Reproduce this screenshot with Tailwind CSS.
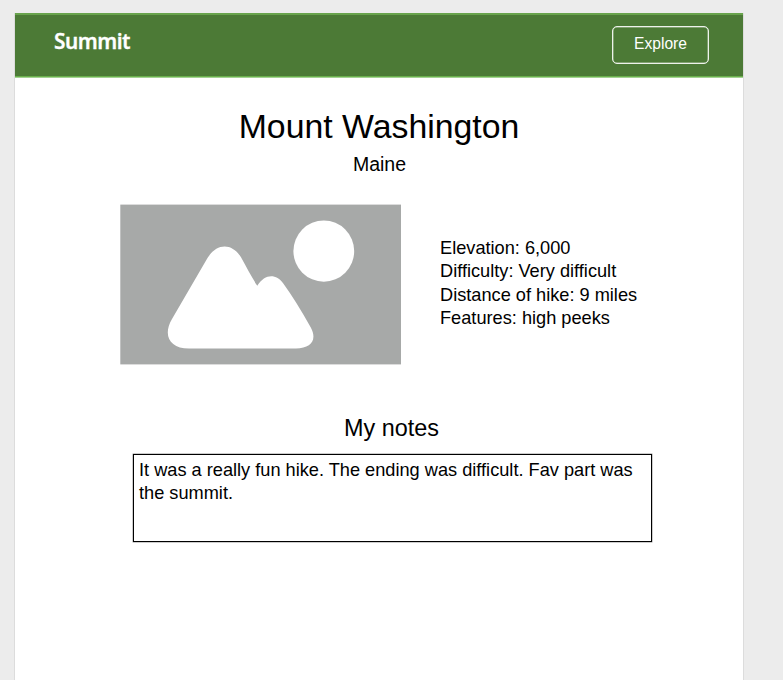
<!DOCTYPE html>
<html lang="en">
<head>
<meta charset="utf-8">
<title>Summit</title>
<script src="https://cdn.jsdelivr.net/npm/@tailwindcss/browser@4"></script>
</head>
<body class="h-[680px] overflow-hidden bg-[#ececec] pt-[13px] pl-[14px] font-['Liberation_Sans',Arial,sans-serif] text-black">
<div class="h-[667px] w-[730px] border-x border-[#dcdcdc] bg-white">
  <header class="mb-px flex h-[64px] items-start justify-between border-t-2 border-b border-t-[#68a34c] border-b-[#69b04c] bg-[#4c7a36] pr-[34px] pl-[39px] shadow-[0_1px_0_#a5d193]">
    <div class="mt-[11px] font-['Noto_Sans',sans-serif] text-[20.8px] leading-[30px] font-semibold tracking-[-0.5px] text-white [-webkit-text-stroke:0.3px_white]">Summit</div>
    <button class="mt-[11px] h-[38px] w-[97px] rounded-[5px] border border-white/90 pb-[2px] text-[15.6px] leading-[20px] text-white shadow-[inset_0_0_0_0.5px_rgba(255,255,255,0.6)]">Explore</button>
  </header>
  <main>
    <h1 class="pt-[27px] text-center text-[33.8px] leading-[42px]">Mount Washington</h1>
    <p class="mt-[5px] pl-px text-center text-[19.5px] leading-[24px]">Maine</p>
    <section class="mt-[28px] flex pl-[105px]">
      <svg class="block h-[161px] w-[281px]" viewBox="0 0 281 161">
        <rect x="0.3" y="0.6" width="280.7" height="159.8" fill="#a7a9a8"/>
        <ellipse cx="203.8" cy="47.1" rx="30.4" ry="30.6" fill="#fff"/>
        <path fill="#fff" d="M87.500 54C97 38.800 112 38.800 121 53.300C127 64 132 74 137.300 81.800C145 69.500 156 69.500 163.300 79.500Q176 97 190.800 123.500C197.500 136 191 144.500 176 144.500H69C49.500 144.500 42.500 131 52 115Z"/>
      </svg>
      <div class="mt-[33px] ml-[39px] text-[18.2px] leading-[23.4px]">
        <p>Elevation: 6,000</p><p>Difficulty: Very difficult</p><p>Distance of hike: 9 miles</p><p>Features: high peeks</p>
      </div>
    </section>
    <h2 class="mt-[48px] pl-[25px] text-center text-[23.4px] leading-[30px]">My notes</h2>
    <div class="mt-[11px] ml-[118px] h-[88px] w-[519px] border border-black pt-[4px] pl-[5px] text-[18.22px] leading-[23.4px] shadow-[0_0_0_0.4px_rgba(0,0,0,0.5)]">It was a really fun hike. The ending was difficult. Fav part was<br>the summit.</div>
  </main>
</div>
</body>
</html>
